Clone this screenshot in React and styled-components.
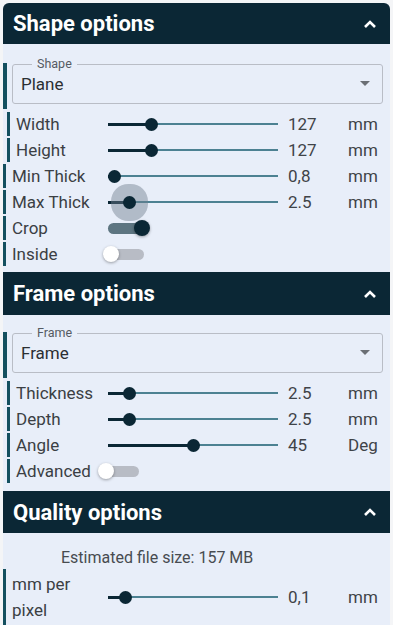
import React from "react";
import styled, { createGlobalStyle } from "styled-components";

const Global = createGlobalStyle`
  html, body {
    margin: 0;
    padding: 0;
    background: #f4f5f7;
    font-family: Roboto, "Noto Sans", sans-serif;
  }
`;

const Panel = styled.div`
  width: 387px;
  margin: 3px 0 0 3px;
  background: #e8eef9;
  border-radius: 6px 6px 0 0;
  overflow: hidden;
`;

const Header = styled.div`
  height: ${p => p.h || 42}px;
  background: #0b2735;
  color: #ffffff;
  display: flex;
  align-items: center;
  justify-content: space-between;
  padding: 0 13px 0 10px;
  box-sizing: border-box;
  font-size: 22px;
  font-weight: 700;
`;

const Body = styled.div`
  padding: ${p => p.pad || "19px 0 6px 0"};
`;

const SelectWrap = styled.div`
  border-left: 4px solid #14505f;
  padding: 0 7px 0 5px;
  margin-bottom: 3px;
`;

const SelectBox = styled.fieldset`
  margin: 0;
  border: 1px solid #b9bdc6;
  border-radius: 3px;
  height: 46px;
  box-sizing: border-box;
  padding: 0 12px 0 8px;
  display: flex;
  align-items: center;
  justify-content: space-between;
  position: relative;
  top: -5px;
  legend {
    font-size: 12.5px;
    color: #555b63;
    padding: 0 5px;
    margin-left: 11px;
    line-height: 12px;
  }
`;

const SelectValue = styled.span`
  font-size: 17px;
  color: #2b2f33;
  margin-top: -6px;
`;

const Caret = styled.span`
  width: 0;
  height: 0;
  border-left: 5px solid transparent;
  border-right: 5px solid transparent;
  border-top: 5px solid #6b6f75;
  margin-top: -6px;
`;

const Row = styled.div`
  margin-left: ${p => p.indent}px;
  border-left: 3px solid #14505f;
  padding-left: 6px;
  min-height: ${p => p.h || 24}px;
  margin-top: ${p => p.mt ?? 2}px;
  display: grid;
  grid-template-columns: ${p => p.labelW}px 170px 70px auto;
  align-items: center;
  font-size: 17px;
  color: #3b3f44;
`;

const Label = styled.span`
  line-height: ${p => (p.wrap ? 26 : 24)}px;
  white-space: ${p => (p.wrap ? "normal" : "nowrap")};
  padding-right: ${p => (p.wrap ? 10 : 0)}px;
`;

const Value = styled.span`
  padding-left: 10px;
  color: #3f4348;
`;

const Unit = styled.span`
  color: #3f4348;
`;

const Track = styled.div`
  position: relative;
  height: 24px;
  &::before {
    content: "";
    position: absolute;
    left: 0;
    right: 0;
    top: 11px;
    height: 2px;
    background: #4c8192;
  }
`;

const Active = styled.div`
  position: absolute;
  left: 0;
  top: 10.5px;
  height: 3px;
  background: #0b2735;
`;

const Thumb = styled.div`
  position: absolute;
  top: 12px;
  width: 13px;
  height: 13px;
  margin: -6.5px 0 0 -6.5px;
  border-radius: 50%;
  background: #0b2735;
  box-shadow: ${p => (p.focus ? "0 0 0 12px rgba(110,125,140,0.45)" : "none")};
`;

const SwitchRow = styled.div`
  margin-left: ${p => p.indent}px;
  border-left: 3px solid #14505f;
  padding-left: 6px;
  height: 24px;
  margin-top: 2px;
  display: flex;
  align-items: center;
  font-size: 17px;
  color: #3b3f44;
`;

const SwitchLabel = styled.span`
  width: ${p => p.w}px;
  flex: none;
`;

const SwitchTrack = styled.div`
  position: relative;
  width: 38px;
  height: 11px;
  border-radius: 6px;
  background: ${p => (p.on ? "#5d7581" : "#b8bcc5")};
`;

const SwitchKnob = styled.div`
  position: absolute;
  top: -3px;
  left: ${p => (p.on ? "26px" : "-3px")};
  width: 16px;
  height: 16px;
  border-radius: 50%;
  background: ${p => (p.on ? "#0b2735" : "#ffffff")};
  box-shadow: 0 1px 3px rgba(0, 0, 0, 0.35);
`;

const Note = styled.div`
  font-size: 16px;
  color: #474b50;
  padding-left: 58px;
  line-height: 20px;
  margin-bottom: 0;
`;

const Chevron = () => (
  <svg width="14" height="10" viewBox="0 0 14 10">
    <path d="M2 8 L7 3 L12 8" stroke="#fff" strokeWidth="2.6" fill="none" />
  </svg>
);

const Slider = ({ label, value, unit, pos, indent = 0, focus, wrap, labelW, h, mt }) => (
  <Row indent={indent} labelW={labelW ?? 96 - indent} h={h} mt={mt}>
    <Label wrap={wrap}>{label}</Label>
    <Track>
      <Active style={{ width: `${pos * 100}%` }} />
      <Thumb focus={focus} style={{ left: `${pos * 100}%` }} />
    </Track>
    <Value>{value}</Value>
    <Unit>{unit}</Unit>
  </Row>
);

const Toggle = ({ label, on, indent = 0, w }) => (
  <SwitchRow indent={indent}>
    <SwitchLabel w={w}>{label}</SwitchLabel>
    <SwitchTrack on={on}>
      <SwitchKnob on={on} />
    </SwitchTrack>
  </SwitchRow>
);

const Select = ({ legend, value }) => (
  <SelectWrap>
    <SelectBox>
      <legend>{legend}</legend>
      <SelectValue>{value}</SelectValue>
      <Caret />
    </SelectBox>
  </SelectWrap>
);

export default function App() {
  return (
    <>
      <Global />
      <Panel>
        <Header h={41}>
          <span>Shape options</span>
          <Chevron />
        </Header>
        <Body>
          <Select legend="Shape" value="Plane" />
          <Slider label="Width" value="127" unit="mm" pos={0.253} indent={4} />
          <Slider label="Height" value="127" unit="mm" pos={0.253} indent={4} />
          <Slider label="Min Thick" value="0,8" unit="mm" pos={0.04} />
          <Slider label="Max Thick" value="2.5" unit="mm" pos={0.124} focus />
          <Toggle label="Crop" on w={96} />
          <Toggle label="Inside" w={94} />
        </Body>
        <Header h={43}>
          <span>Frame options</span>
          <Chevron />
        </Header>
        <Body pad="17px 0 8px 0">
          <Select legend="Frame" value="Frame" />
          <Slider label="Thickness" value="2.5" unit="mm" pos={0.124} indent={4} />
          <Slider label="Depth" value="2.5" unit="mm" pos={0.124} indent={4} />
          <Slider label="Angle" value="45" unit="Deg" pos={0.5} indent={4} />
          <Toggle label="Advanced" indent={4} w={85} />
        </Body>
        <Header h={42}>
          <span>Quality options</span>
          <Chevron />
        </Header>
        <Body pad="15px 0 0 0">
          <Note>Estimated file size: 157 MB</Note>
          <Slider label="mm per pixel" value="0,1" unit="mm" pos={0.1} wrap labelW={96} h={56} mt={1} />
        </Body>
      </Panel>
    </>
  );
}
